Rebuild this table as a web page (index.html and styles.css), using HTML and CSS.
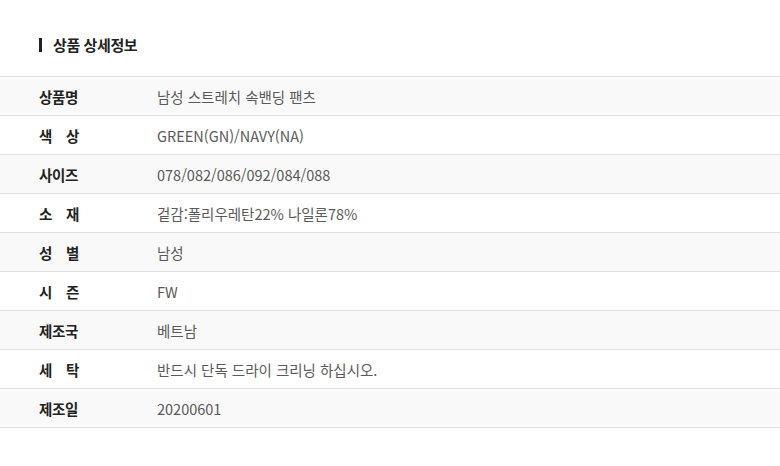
FILE: index.html
```html
<!DOCTYPE html>
<html lang="ko">
<head>
<meta charset="utf-8">
<link rel="stylesheet" href="styles.css">
</head>
<body>
<section class="detail">
  <h2 class="title">상품 상세정보</h2>
  <div class="table">
    <div class="row odd"><div class="label">상품명</div><div class="value">남성 스트레치 속밴딩 팬츠</div></div>
    <div class="row"><div class="label">색 상</div><div class="value">GREEN(GN)/NAVY(NA)</div></div>
    <div class="row odd"><div class="label">사이즈</div><div class="value">078/082/086/092/084/088</div></div>
    <div class="row"><div class="label">소 재</div><div class="value">겉감:폴리우레탄22% 나일론78%</div></div>
    <div class="row odd"><div class="label">성 별</div><div class="value">남성</div></div>
    <div class="row"><div class="label">시 즌</div><div class="value">FW</div></div>
    <div class="row odd"><div class="label">제조국</div><div class="value">베트남</div></div>
    <div class="row"><div class="label">세 탁</div><div class="value">반드시 단독 드라이 크리닝 하십시오.</div></div>
    <div class="row odd"><div class="label">제조일</div><div class="value">20200601</div></div>
  </div>
</section>
</body>
</html>
```
FILE: styles.css
```css
html, body {
  margin: 0;
  padding: 0;
  background: #fff;
  font-family: "Noto Sans CJK KR", "Noto Sans", sans-serif;
}
.detail {
  padding-top: 38px;
}
.title {
  margin: 0 0 0 39px;
  padding-left: 11px;
  border-left: 3px solid #222;
  font-size: 15px;
  font-weight: 700;
  color: #222;
  line-height: 14px;
  height: 14px;
  display: flex;
  align-items: center;
  letter-spacing: -0.4px;
}
.table {
  margin-top: 24px;
  border-top: 1px solid #e2e2e2;
}
.row {
  display: flex;
  align-items: center;
  height: 38px;
  border-bottom: 1px solid #e2e2e2;
  background: #fff;
  font-size: 14.5px;
}
.row.odd {
  background: #f9f9f9;
}
.label {
  width: 40px;
  margin-left: 39px;
  font-weight: 700;
  color: #222;
  text-align: justify;
  text-align-last: justify;
  letter-spacing: -0.3px;
}
.value {
  margin-left: 78px;
  color: #5a5a5a;
}
```
